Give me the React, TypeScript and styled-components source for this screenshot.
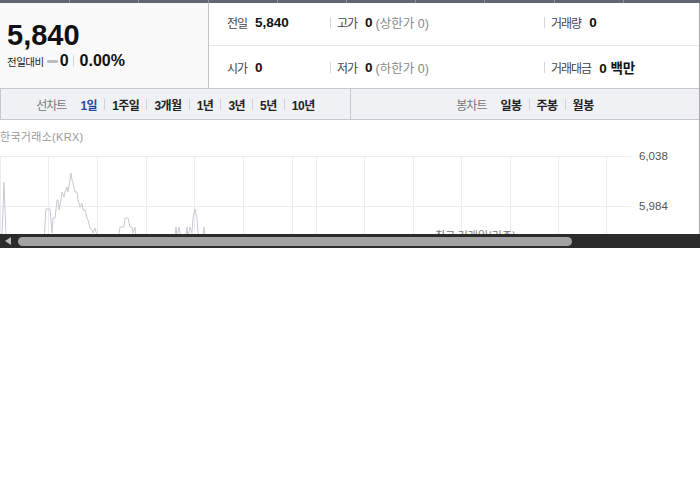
import React from "react";
import styled, { createGlobalStyle } from "styled-components";

const GlobalStyle = createGlobalStyle`
  html, body { margin: 0; padding: 0; background: #fff; }
  body { font-family: "Liberation Sans", "Noto Sans CJK KR", sans-serif; color: #222; }
  * { box-sizing: border-box; }
`;

const Widget = styled.div`
  width: 700px;
`;

const TopStrip = styled.div`
  display: flex;
  height: 3px;
  background: #5f6672;
`;

const StripCell = styled.div`
  flex: 0 0 69.2px;
  border-left: 1px solid #8e939b;
  &:first-child { border-left: none; }
`;

const Frame = styled.div`
  border-right: 1px solid #a9a9a9;
`;

const Summary = styled.div`
  display: grid;
  grid-template-columns: 209px 1fr;
  height: 85px;
`;

const PricePanel = styled.div`
  background: #f9f9f9;
  border-right: 1px solid #c4c4c4;
  padding: 16px 0 0 7px;
`;

const Price = styled.div`
  font-size: 29px;
  font-weight: 700;
  line-height: 32px;
  color: #111;
`;

const ChangeRow = styled.div`
  display: flex;
  align-items: center;
  height: 20px;
`;

const ChangeLabel = styled.span`
  font-size: 10.5px;
  letter-spacing: -0.5px;
  color: #222;
  margin-right: 3px;
`;

const FlatMark = styled.span`
  width: 11px;
  height: 3px;
  border-radius: 1px;
  background: #bdbdbd;
  margin-right: 2px;
`;

const ChangeValue = styled.span`
  font-size: 16px;
  font-weight: 700;
  color: #111;
`;

const Divider = styled.span`
  width: 1px;
  height: 12px;
  background: #d8d8d8;
  margin: 0 6px 0 4px;
`;

const Stats = styled.div`
  display: grid;
  grid-template-rows: 43px 42px;
`;

const StatRow = styled.div`
  display: grid;
  grid-template-columns: 121px 214px 1fr;
  align-items: center;
  &:first-child {
    padding-bottom: 4px;
    border-bottom: 1px solid #e6e6e6;
  }
`;

const StatCell = styled.div<{ $sep?: boolean }>`
  display: flex;
  align-items: center;
  font-size: 12px;
  padding-left: ${(p) => (p.$sep ? "0" : "18px")};
  &::before {
    content: "";
    display: ${(p) => (p.$sep ? "block" : "none")};
    width: 1px;
    height: 11px;
    background: #d6d6d6;
    margin-right: 6px;
  }
`;

const StatLabel = styled.span`
  color: #444;
  letter-spacing: -1px;
  margin-right: 8px;
`;

const StatValue = styled.span`
  font-size: 13.5px;
  font-weight: 700;
  color: #111;
`;

const StatSub = styled.span`
  color: #888;
  font-size: 12.5px;
  margin-left: 3px;
`;

const Tabs = styled.div`
  display: grid;
  grid-template-columns: 350px 1fr;
  height: 32px;
  background: #eff1f5;
  border-top: 1px solid #c3c7ce;
  border-bottom: 1px solid #c3c7ce;
  border-left: 1px solid #c3c7ce;
`;

const TabGroup = styled.div<{ $divider?: boolean }>`
  display: flex;
  align-items: center;
  justify-content: center;
  border-right: ${(p) => (p.$divider ? "1px solid #c6c9cf" : "none")};
`;

const TabLabel = styled.span`
  font-size: 12px;
  color: #777;
  letter-spacing: -1px;
  margin-right: 14px;
`;

const TabItem = styled.span<{ $active?: boolean }>`
  display: flex;
  align-items: center;
  font-size: 12px;
  font-weight: 700;
  letter-spacing: -0.5px;
  color: ${(p) => (p.$active ? "#2348a6" : "#222")};
  &::before {
    content: "";
    width: 1px;
    height: 11px;
    background: #cfd2d7;
    margin: 0 7px;
  }
  ${TabLabel} + &::before {
    display: none;
  }
`;

const ChartArea = styled.div`
  height: 114px;
`;

const Caption = styled.div`
  height: 24px;
  padding-top: 10px;
  font-size: 11px;
  line-height: 14px;
  color: #9a9a9a;
  letter-spacing: 0.3px;
`;

const ChartSvg = styled.svg`
  display: block;
`;

const ScrollBar = styled.div`
  display: flex;
  align-items: center;
  height: 14px;
  background: #2b2b2b;
  padding-left: 5px;
`;

const ArrowLeft = styled.span`
  width: 0;
  height: 0;
  border-top: 4.5px solid transparent;
  border-bottom: 4.5px solid transparent;
  border-right: 6px solid #b9b9b9;
`;

const Thumb = styled.span`
  margin-left: 7px;
  width: 554px;
  height: 9px;
  border-radius: 5px;
  background: #a3a3a3;
`;

const vLines = [0.5, 48.5, 97.5, 146.5, 194.5, 243.5, 292.5, 316.5, 364.5, 413.5, 461.5, 510.5, 558.5, 606.5];

const rawPoints: [number, number][] = [
  [0, 245], [2, 236], [4, 182], [6, 236], [8, 245],
  [44, 245], [45, 225], [46, 209], [50, 209], [52, 233], [53, 218], [55, 218], [57, 200], [58, 200],
  [59, 210], [61, 200], [62, 192], [64, 197], [65, 192], [67, 187], [68, 192], [70, 180], [71, 173],
  [72, 180], [73, 183], [75, 192], [77, 192], [78, 200], [80, 207], [82, 203], [83, 210], [85, 210],
  [87, 218], [88, 220], [90, 228], [92, 230], [93, 233], [95, 228], [97, 236], [99, 245],
  [118, 245], [119, 233], [120, 227], [124, 227], [125, 218], [128, 218], [130, 227], [132, 227],
  [133, 233], [135, 227], [136, 236], [138, 245],
  [174, 245], [176, 227], [177, 236], [179, 227], [181, 240], [186, 236], [187, 227], [188, 238],
  [190, 227], [192, 233], [193, 218], [195, 209], [197, 218], [198, 233], [202, 240], [204, 227],
  [205, 240], [210, 245],
];

const points = rawPoints.map(([x, y]) => `${x},${y - 144}`).join(" ");

export default function App() {
  return (
    <Widget>
      <GlobalStyle />
      <TopStrip>
        {Array.from({ length: 10 }).map((_, i) => (
          <StripCell key={i} />
        ))}
      </TopStrip>
      <Frame>
        <Summary>
          <PricePanel>
            <Price>5,840</Price>
            <ChangeRow>
              <ChangeLabel>전일대비</ChangeLabel>
              <FlatMark />
              <ChangeValue>0</ChangeValue>
              <Divider />
              <ChangeValue>0.00%</ChangeValue>
            </ChangeRow>
          </PricePanel>
          <Stats>
            <StatRow>
              <StatCell>
                <StatLabel>전일</StatLabel>
                <StatValue>5,840</StatValue>
              </StatCell>
              <StatCell $sep>
                <StatLabel>고가</StatLabel>
                <StatValue>0</StatValue>
                <StatSub>(상한가 0)</StatSub>
              </StatCell>
              <StatCell $sep>
                <StatLabel>거래량</StatLabel>
                <StatValue>0</StatValue>
              </StatCell>
            </StatRow>
            <StatRow>
              <StatCell>
                <StatLabel>시가</StatLabel>
                <StatValue>0</StatValue>
              </StatCell>
              <StatCell $sep>
                <StatLabel>저가</StatLabel>
                <StatValue>0</StatValue>
                <StatSub>(하한가 0)</StatSub>
              </StatCell>
              <StatCell $sep>
                <StatLabel>거래대금</StatLabel>
                <StatValue>0 백만</StatValue>
              </StatCell>
            </StatRow>
          </Stats>
        </Summary>
        <Tabs>
          <TabGroup $divider>
            <TabLabel>선차트</TabLabel>
            <TabItem $active>1일</TabItem>
            <TabItem>1주일</TabItem>
            <TabItem>3개월</TabItem>
            <TabItem>1년</TabItem>
            <TabItem>3년</TabItem>
            <TabItem>5년</TabItem>
            <TabItem>10년</TabItem>
          </TabGroup>
          <TabGroup>
            <TabLabel>봉차트</TabLabel>
            <TabItem>일봉</TabItem>
            <TabItem>주봉</TabItem>
            <TabItem>월봉</TabItem>
          </TabGroup>
        </Tabs>
        <ChartArea>
          <Caption>한국거래소(KRX)</Caption>
          <ChartSvg width={699} height={90} viewBox="0 0 699 90">
            <line x1={0} y1={12.5} x2={631} y2={12.5} stroke="#ececec" />
            <line x1={0} y1={62.5} x2={631} y2={62.5} stroke="#ececec" />
            {vLines.map((x) => (
              <line key={x} x1={x} y1={12} x2={x} y2={90} stroke="#ececec" />
            ))}
            <polyline points={points} fill="none" stroke="#c6cad0" strokeWidth={1} />
            <text x={639} y={16} fontSize={11.5} fill="#555" fontFamily="Liberation Sans, sans-serif">
              6,038
            </text>
            <text x={639} y={66} fontSize={11.5} fill="#555" fontFamily="Liberation Sans, sans-serif">
              5,984
            </text>
            <text x={435} y={96} fontSize={11} fill="#777" fontFamily="Noto Sans CJK KR, sans-serif">
              최근 거래일(기준)
            </text>
          </ChartSvg>
        </ChartArea>
      </Frame>
      <ScrollBar>
        <ArrowLeft />
        <Thumb />
      </ScrollBar>
    </Widget>
  );
}
